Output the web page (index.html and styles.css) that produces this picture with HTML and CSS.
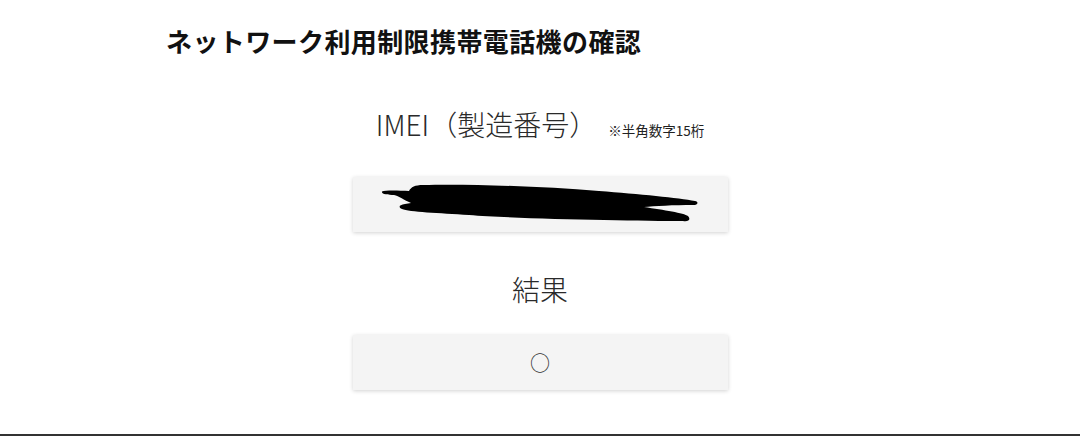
FILE: index.html
```html
<!DOCTYPE html>
<html lang="ja">
<head>
<meta charset="utf-8">
<title>ネットワーク利用制限携帯電話機の確認</title>
<link rel="stylesheet" href="styles.css">
</head>
<body>
<div class="page">
  <h1 class="title">ネットワーク利用制限携帯電話機の確認</h1>
  <section class="field field-imei">
    <div class="label-row">
      <span class="label">IMEI（製造番号）</span><span class="note">※半角数字15桁</span>
    </div>
    <div class="box">
      <svg class="redact" width="322" height="44" viewBox="380 180 322 44" aria-hidden="true">
        <path d="M383,191.5 C386,190 400,190.5 410,191 C412,187 416,185 424,185 C470,184 540,186 600,191 C640,194 680,198 696,201 C700,202 699,205 694,205 C675,205 655,206 645,207 C665,210 685,213 689,216 C692,219 690,222 684,221 C640,221 520,219 470,215 C440,213 410,212 403,209 C399,207 400,205 406,204 L412,203 C405,200 400,196 395,195 C389,195 382,194 383,191.5 Z" fill="#000"/>
      </svg>
    </div>
  </section>
  <section class="field field-result">
    <div class="label-row">
      <span class="label label-result">結果</span>
    </div>
    <div class="box">
      <span class="mark">○</span>
    </div>
  </section>
</div>
</body>
</html>
```
FILE: styles.css
```css
html, body {
  margin: 0;
  padding: 0;
  background: #fff;
}
body {
  font-family: "Noto Sans CJK JP", "Noto Sans", sans-serif;
  color: #333;
}
.page {
  box-sizing: border-box;
  height: 436px;
  border-bottom: 2px solid #333;
  padding-top: 21px;
  overflow: hidden;
}
.title {
  margin: 0 0 0 166px;
  font-size: 26px;
  line-height: 39px;
  font-weight: 700;
  color: #111;
  letter-spacing: 0.4px;
}
.field {
  display: flex;
  flex-direction: column;
  align-items: center;
}
.field-imei {
  margin-top: 44px;
}
.field-result {
  margin-top: 36px;
}
.label-row {
  display: flex;
  align-items: baseline;
  justify-content: center;
  gap: 11px;
}
.label {
  font-size: 28px;
  line-height: 40px;
  font-weight: 300;
  color: #2a2a2a;
}
.label-result {
  font-size: 28px;
  line-height: 42px;
}
.note {
  font-size: 13.5px;
  color: #222;
}
.box {
  box-sizing: border-box;
  width: 375px;
  height: 55px;
  margin-top: 33px;
  background: #f4f4f4;
  box-shadow: 0 1px 4px rgba(0, 0, 0, 0.18);
  display: flex;
  align-items: center;
  justify-content: center;
}
.field-result .box {
  margin-top: 25px;
}
.redact {
  display: block;
  margin-top: -5px;
}
.mark {
  font-size: 20px;
  line-height: 1;
  color: #333;
}
```
